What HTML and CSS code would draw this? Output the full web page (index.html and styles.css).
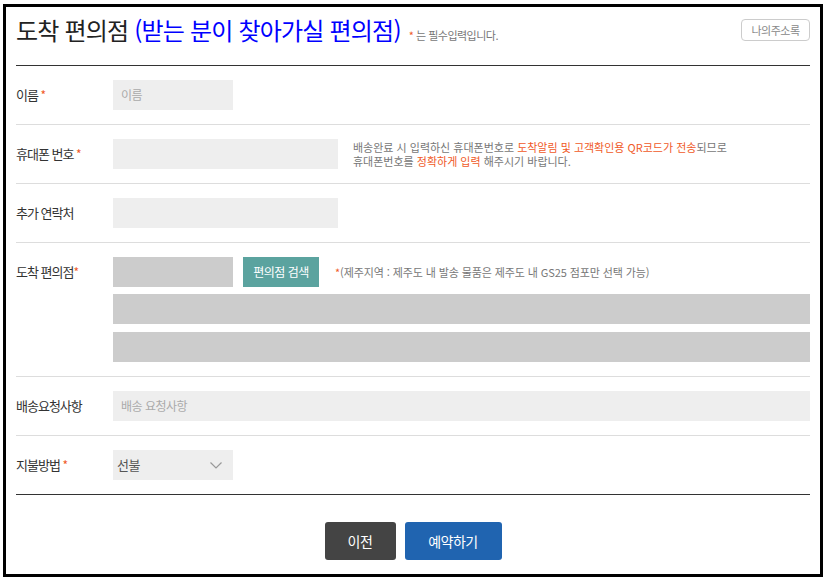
FILE: index.html
```html
<!DOCTYPE html>
<html lang="ko">
<head>
<meta charset="utf-8">
<title>도착 편의점</title>
<link rel="stylesheet" href="styles.css">
</head>
<body>
<div class="frame">
  <div class="head">
    <h1 class="title">도착 편의점 <span class="blue">(받는 분이 찾아가실 편의점)</span></h1>
    <span class="req-note"><span class="star">*</span> 는 필수입력입니다.</span>
    <span class="addr-btn">나의주소록</span>
  </div>

  <div class="row">
    <div class="label">이름 <span class="star">*</span></div>
    <div class="field">
      <div class="box w120 ph">이름</div>
    </div>
  </div>

  <div class="row">
    <div class="label">휴대폰 번호 <span class="star">*</span></div>
    <div class="field">
      <div class="box w225"></div>
      <p class="help">배송완료 시 입력하신 휴대폰번호로 <em>도착알림 및 고객확인용 QR코드가 전송</em>되므로<br>휴대폰번호를 <em>정확하게 입력</em> 해주시기 바랍니다.</p>
    </div>
  </div>

  <div class="row">
    <div class="label">추가 연락처</div>
    <div class="field">
      <div class="box w225"></div>
    </div>
  </div>

  <div class="row">
    <div class="label">도착 편의점<span class="star">*</span></div>
    <div class="field col">
      <div class="line">
        <div class="box dark w120"></div>
        <span class="search-btn">편의점 검색</span>
        <span class="note"><span class="star">*</span>(제주지역 : 제주도 내 발송 물품은 제주도 내 GS25 점포만 선택 가능)</span>
      </div>
      <div class="box dark full gap1"></div>
      <div class="box dark full gap2"></div>
    </div>
  </div>

  <div class="row">
    <div class="label">배송요청사항</div>
    <div class="field">
      <div class="box full ph">배송 요청사항</div>
    </div>
  </div>

  <div class="row last">
    <div class="label">지불방법 <span class="star">*</span></div>
    <div class="field">
      <div class="box w120 select">
        <span>선불</span>
        <svg class="chev" width="12" height="7" viewBox="0 0 12 7"><path d="M0.5 0.5 L6 6 L11.5 0.5" fill="none" stroke="#999" stroke-width="1.2"/></svg>
      </div>
    </div>
  </div>

  <div class="actions">
    <span class="btn prev">이전</span>
    <span class="btn submit">예약하기</span>
  </div>
</div>
</body>
</html>
```

FILE: styles.css
```css
body {
  margin: 0;
  background: #fff;
  font-family: "Noto Sans CJK KR", "Noto Sans", sans-serif;
}

.frame {
  box-sizing: border-box;
  width: 820px;
  height: 573px;
  margin: 4px 0 0 3px;
  border: 3px solid #000;
  padding: 0 10px;
}

.head {
  display: flex;
  align-items: baseline;
  padding: 8px 0 20px;
  border-bottom: 1px solid #333;
}

.title {
  margin: 0;
  font-size: 24px;
  font-weight: 400;
  line-height: 30px;
  letter-spacing: -0.8px;
  color: #222;
}

.title .blue {
  color: #0000ff;
}

.req-note {
  margin-left: 8px;
  font-size: 11px;
  color: #777;
  letter-spacing: -0.5px;
}

.star {
  color: #f05a28;
}

.addr-btn {
  margin-left: auto;
  align-self: flex-start;
  margin-top: 4px;
  box-sizing: border-box;
  width: 69px;
  height: 22px;
  border: 1px solid #ccc;
  border-radius: 4px;
  color: #888;
  font-size: 11px;
  line-height: 20px;
  text-align: center;
  letter-spacing: -0.5px;
}

.row {
  display: flex;
  padding: 14px 0;
  border-bottom: 1px solid #ddd;
}

.row.last {
  border-bottom-color: #333;
}

.label {
  flex: none;
  width: 97px;
  font-size: 13px;
  line-height: 30px;
  color: #333;
  letter-spacing: -1px;
}

.label .star {
  font-size: 12px;
}

.field {
  flex: 1;
  display: flex;
  align-items: center;
}

.field.col {
  flex-direction: column;
  align-items: stretch;
}

.line {
  display: flex;
  align-items: center;
}

.box {
  box-sizing: border-box;
  height: 30px;
  background: #eee;
  padding: 0 8px;
  font-size: 12px;
  line-height: 30px;
  color: #aaa;
  letter-spacing: -0.5px;
}

.box.dark {
  background: #ccc;
}

.w120 {
  width: 120px;
}

.w225 {
  width: 225px;
}

.full {
  width: 100%;
}

.gap1 {
  margin-top: 7px;
}

.gap2 {
  margin-top: 8px;
}

.help {
  margin: 0 0 0 15px;
  font-size: 11px;
  line-height: 14px;
  color: #777;
  letter-spacing: 0;
}

.help em {
  font-style: normal;
  color: #f05a28;
}

.search-btn {
  box-sizing: border-box;
  width: 76px;
  height: 30px;
  margin-left: 10px;
  background: #5ba39f;
  color: #fff;
  font-size: 12px;
  line-height: 30px;
  text-align: center;
  letter-spacing: -0.5px;
}

.note {
  margin-left: 16px;
  font-size: 11px;
  color: #777;
  letter-spacing: -0.1px;
}

.select {
  display: flex;
  align-items: center;
  justify-content: space-between;
  padding: 0 11px 0 4px;
  color: #555;
  font-size: 13px;
}

.actions {
  display: flex;
  justify-content: center;
  gap: 9px;
  padding-top: 27px;
}

.btn {
  height: 38px;
  border-radius: 3px;
  color: #fff;
  font-size: 14px;
  line-height: 38px;
  text-align: center;
  letter-spacing: -0.5px;
}

.prev {
  width: 71px;
  background: #444;
}

.submit {
  width: 97px;
  background: #2064b0;
}
```
